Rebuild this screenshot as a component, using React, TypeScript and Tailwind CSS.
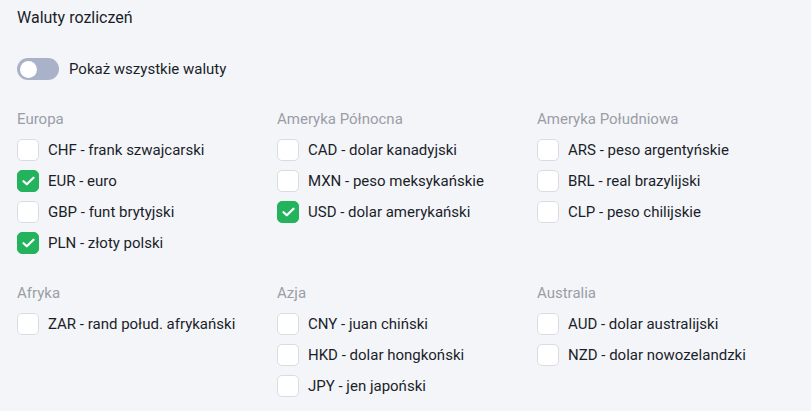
import { useState } from "react";

type Currency = { code: string; name: string };
type Region = { title: string; items: Currency[] };

const regions: Region[][] = [
  [
    {
      title: "Europa",
      items: [
        { code: "CHF", name: "frank szwajcarski" },
        { code: "EUR", name: "euro" },
        { code: "GBP", name: "funt brytyjski" },
        { code: "PLN", name: "złoty polski" },
      ],
    },
    {
      title: "Ameryka Północna",
      items: [
        { code: "CAD", name: "dolar kanadyjski" },
        { code: "MXN", name: "peso meksykańskie" },
        { code: "USD", name: "dolar amerykański" },
      ],
    },
    {
      title: "Ameryka Południowa",
      items: [
        { code: "ARS", name: "peso argentyńskie" },
        { code: "BRL", name: "real brazylijski" },
        { code: "CLP", name: "peso chilijskie" },
      ],
    },
  ],
  [
    {
      title: "Afryka",
      items: [{ code: "ZAR", name: "rand połud. afrykański" }],
    },
    {
      title: "Azja",
      items: [
        { code: "CNY", name: "juan chiński" },
        { code: "HKD", name: "dolar hongkoński" },
        { code: "JPY", name: "jen japoński" },
      ],
    },
    {
      title: "Australia",
      items: [
        { code: "AUD", name: "dolar australijski" },
        { code: "NZD", name: "dolar nowozelandzki" },
      ],
    },
  ],
];

function CheckBox({ checked, onClick }: { checked: boolean; onClick: () => void }) {
  return (
    <button
      onClick={onClick}
      className={`flex h-[22px] w-[22px] shrink-0 items-center justify-center rounded-[5px] border ${
        checked ? "border-[#22b35c] bg-[#22b35c]" : "border-[#d9dce3] bg-white"
      }`}
    >
      {checked && (
        <svg width="13" height="10" viewBox="0 0 13 10" fill="none">
          <path d="M1.5 5.2L4.8 8.3L11.5 1.7" stroke="white" strokeWidth="2.2" strokeLinecap="round" strokeLinejoin="round" />
        </svg>
      )}
    </button>
  );
}

export default function App() {
  const [showAll, setShowAll] = useState(false);
  const [selected, setSelected] = useState<string[]>(["EUR", "PLN", "USD"]);

  const toggle = (code: string) =>
    setSelected((s) => (s.includes(code) ? s.filter((c) => c !== code) : [...s, code]));

  return (
    <div className="min-h-[411px] w-[811px] bg-[#f4f5f9] px-[17px] pt-[8px] font-['Roboto',sans-serif] text-[#1a1e29]">
      <h2 className="text-[16px] leading-[20px]">Waluty rozliczeń</h2>

      {/* show all switch */}
      <div className="mt-[30px] flex items-center gap-[10px]">
        <button
          onClick={() => setShowAll(!showAll)}
          className={`flex h-[22px] w-[42px] items-center rounded-full px-[3px] ${
            showAll ? "justify-end bg-[#22b35c]" : "justify-start bg-[#a9b2c8]"
          }`}
        >
          <span className="h-[17px] w-[17px] rounded-full bg-white" />
        </button>
        <span className="text-[15px]">Pokaż wszystkie waluty</span>
      </div>

      <div className="mt-[28px] flex flex-col gap-[29px]">
        {regions.map((row, ri) => (
          <div key={ri} className="grid grid-cols-[260px_260px_260px]">
            {row.map((region) => (
              <div key={region.title}>
                <div className="text-[15px] leading-[20px] text-[#9a9da6]">{region.title}</div>
                <div className="mt-[10px] flex flex-col gap-[9px]">
                  {region.items.map((c) => (
                    <label key={c.code} className="flex items-center gap-[9px] text-[15px] leading-[22px]">
                      <CheckBox checked={selected.includes(c.code)} onClick={() => toggle(c.code)} />
                      <span>
                        {c.code} - {c.name}
                      </span>
                    </label>
                  ))}
                </div>
              </div>
            ))}
          </div>
        ))}
      </div>
    </div>
  );
}
